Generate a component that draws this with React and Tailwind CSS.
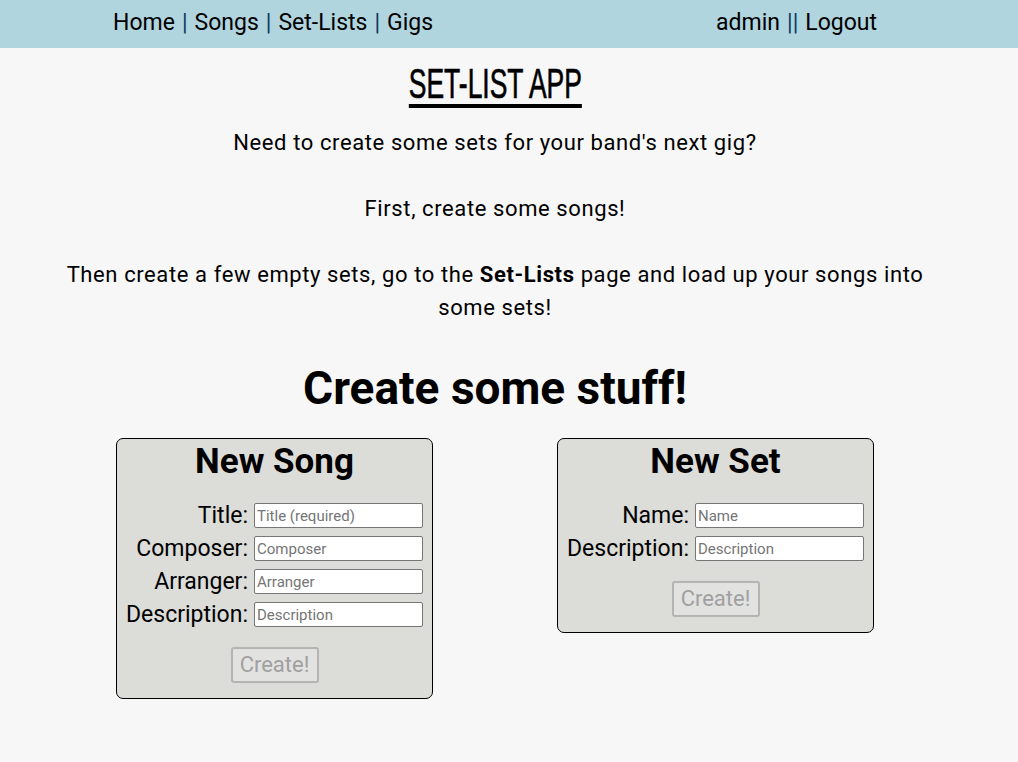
const Field = ({ label, placeholder }) => (
    <>
        <label className="text-[23px] leading-[25px] text-right text-black">{label}</label>
        <input
            type="text"
            placeholder={placeholder}
            className="w-[169px] h-[25px] bg-white border border-[#767676] rounded-[2px] px-[2px] text-[15px] text-black placeholder:text-[#757575] outline-none"
        />
    </>
);

const Card = ({ title, fields }) => (
    <div className="w-[317px] bg-[#dcdcd8] border border-black rounded-[7px] pt-[3px] pb-[15px] flex flex-col items-center">
        <h2 className="text-[35px] leading-[40px] font-bold text-black">{title}</h2>
        <div className="grid grid-cols-[auto_auto] justify-center items-center gap-x-[6px] gap-y-[8px] mt-[21px]">
            {fields.map(f => (
                <Field key={f.label} label={f.label} placeholder={f.placeholder} />
            ))}
        </div>
        <button
            disabled
            className="mt-[20px] w-[88px] h-[36px] border-2 border-[#b4b4b2] rounded-[3px] bg-[#e2e2e0] text-[22px] leading-none text-[#a0a0a0]"
        >
            Create!
        </button>
    </div>
);

const App = () => {
    return (
        <div className="min-h-screen bg-[#f7f7f7] font-['Roboto',sans-serif] text-black">
            {/* Navbar */}
            <nav className="h-[48px] bg-[#b1d5de] flex items-center justify-between pl-[113px] pr-[141px] pb-[2px] text-[23px]">
                <div className="flex items-center">
                    <span>Home</span>
                    <span className="text-[#0b3a5e] mx-[7px]">|</span>
                    <span>Songs</span>
                    <span className="text-[#0b3a5e] mx-[7px]">|</span>
                    <span>Set-Lists</span>
                    <span className="text-[#0b3a5e] mx-[7px]">|</span>
                    <span>Gigs</span>
                </div>
                <div className="flex items-center">
                    <span>admin</span>
                    <span className="text-[#0b3a5e] mx-[7px]">||</span>
                    <span>Logout</span>
                </div>
            </nav>

            <main className="w-[900px] ml-[45px] flex flex-col items-center text-center">
                <h1 className="mt-[12px] h-[48px] leading-[48px] text-[42px] font-['Liberation_Sans_Narrow','Liberation_Sans',sans-serif] uppercase underline decoration-[4px] underline-offset-[6px] scale-x-[0.63] [-webkit-text-stroke:0.7px_black]">
                    Set-List App
                </h1>

                <p className="mt-[18px] text-[22px] leading-[33px] tracking-[0.6px]">
                    Need to create some sets for your band's next gig?
                    <br />
                    <br />
                    First, create some songs!
                    <br />
                    <br />
                    Then create a few empty sets, go to the <b>Set-Lists</b> page and load up your songs into some sets!
                </p>

                <h2 className="mt-[36px] text-[46px] leading-[56px] font-bold">Create some stuff!</h2>

                <div className="mt-[22px] w-full flex justify-center items-start gap-[124px]">
                    <Card
                        title="New Song"
                        fields={[
                            { label: 'Title:', placeholder: 'Title (required)' },
                            { label: 'Composer:', placeholder: 'Composer' },
                            { label: 'Arranger:', placeholder: 'Arranger' },
                            { label: 'Description:', placeholder: 'Description' },
                        ]}
                    />
                    <Card
                        title="New Set"
                        fields={[
                            { label: 'Name:', placeholder: 'Name' },
                            { label: 'Description:', placeholder: 'Description' },
                        ]}
                    />
                </div>
            </main>
        </div>
    );
};

export default App;
